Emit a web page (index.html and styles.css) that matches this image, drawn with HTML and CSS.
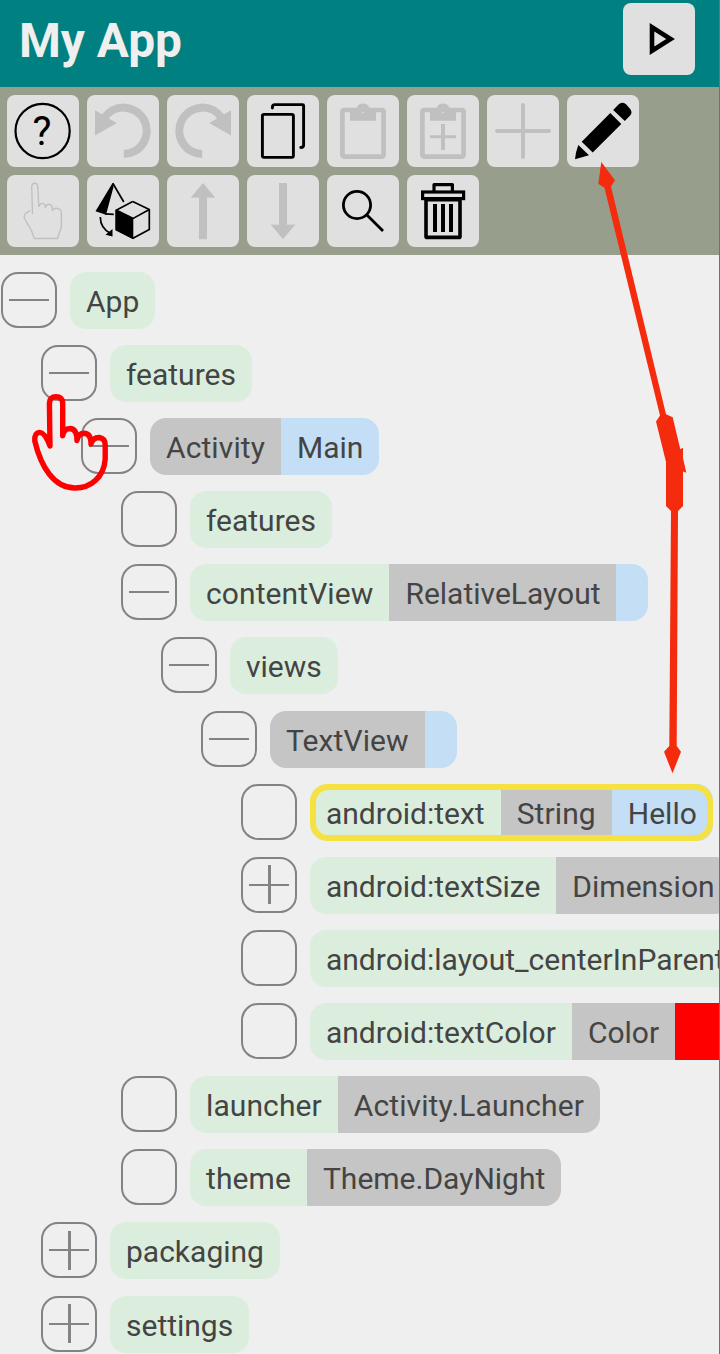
FILE: index.html
```
<!DOCTYPE html>
<html lang="en">
<head>
<meta charset="utf-8">
<title>My App</title>
<link rel="stylesheet" href="styles.css">
</head>
<body>
<div class="screen">
  <header class="header">
    <h1 class="title">My App</h1>
    <button class="tool" aria-label="Run"><svg viewBox="0 0 72 72"><path class="line" stroke-width="4.6" d="M29 24.2V47.8L47.6 36Z"/></svg></button>
  </header>
  <nav class="toolbar">
    <button class="tool" aria-label="Help"><svg viewBox="0 0 72 72"><circle class="line" cx="35.6" cy="36" r="27.1" stroke-width="2.2"/><text class="help" x="35" y="50.3" text-anchor="middle">?</text></svg></button>
    <button class="tool off" aria-label="Undo"><svg viewBox="0 0 72 72"><path class="line" stroke-width="8" d="M36.8 59A23.2 23.2 0 1 0 17.5 22.5"/><path d="M8 15.3V40.6L29.8 28Z"/></svg></button>
    <button class="tool off" aria-label="Redo"><svg viewBox="0 0 72 72"><g transform="translate(72 0) scale(-1 1)"><path class="line" stroke-width="8" d="M36.8 59A23.2 23.2 0 1 0 17.5 22.5"/><path d="M8 15.3V40.6L29.8 28Z"/></g></svg></button>
    <button class="tool" aria-label="Copy"><svg viewBox="0 0 72 72"><rect class="line" x="15.4" y="19.4" width="31" height="43" rx="1.6" stroke-width="2.9"/><path class="line round" stroke-width="2.9" d="M25.4 13V12q0-2.4 2.6-2.4H55.6q1 0 1 1V50q0 2.5-2.8 2.5"/></svg></button>
    <button class="tool off" aria-label="Paste"><svg viewBox="0 0 72 72"><rect class="line" x="15.4" y="15" width="41.2" height="46.6" rx="1.8" stroke-width="4.7"/><path fill-rule="evenodd" d="M23 13H29.5A7 7 0 0 1 42.5 13H49V25.8H23ZM36 12.7a2.6 2.6 0 1 0 .01 0Z"/></svg></button>
    <button class="tool off" aria-label="Paste inside"><svg viewBox="0 0 72 72"><rect class="line" x="15.4" y="15" width="41.2" height="46.6" rx="1.8" stroke-width="4.7"/><path fill-rule="evenodd" d="M23 13H29.5A7 7 0 0 1 42.5 13H49V25.8H23ZM36 12.7a2.6 2.6 0 1 0 .01 0Z"/><path d="M34 29h4v26h-4zM23 40.2h26v3H23z"/></svg></button>
    <button class="tool off" aria-label="Add"><svg viewBox="0 0 72 72"><path class="line round" stroke-width="4" d="M36 10V62M10 36H62"/></svg></button>
    <button class="tool" aria-label="Edit"><svg viewBox="0 0 72 72"><path d="M43.3 18L54.3 29L25.7 57.6L14.7 46.8ZM46.2 15L51.5 9.4Q55 6.3 59 9.3L63.2 14Q65.7 17.5 63.4 20.2L57.8 25.9ZM11.3 50L22 60.2L8 64.3L9 57.5Z"/></svg></button>
    <button class="tool off" aria-label="Select"><svg viewBox="0 0 72 72"><path class="line round" stroke-width="1.4" d="M25.5 38.5L24.7 12Q24.8 8.3 27.6 8.3Q30.5 8.3 30.8 12L31.8 31.5Q33 28.4 35.5 28.4Q38.5 28.6 38.3 32.5Q39.5 29 42.2 29.3Q45.7 29.8 45.3 35.5Q47 32.5 50.5 33.4Q54.3 34.5 54.4 38V52L50.5 63.5H27.2L24.5 55.5L17.5 43.5Q16.5 41 18.3 38.6L22.5 35.8"/></svg></button>
    <button class="tool" aria-label="Convert"><svg viewBox="0 0 72 72"><path d="M25.7 7.8L8.5 36.2L19 39.8L26.5 12ZM28.7 34.5L46.3 43V64L28.7 54.9ZM25.5 54V61.6L18.5 59.8Z"/><path class="line" stroke-width="1.7" d="M25.8 8.2L36.8 27M18 38.8L26.8 39.3M45.7 26.6L62.3 34.6V54.6L46 63.3L29.2 54.7V35.2L45.7 26.6M29 35L46.2 43.4L62.3 34.6M13.3 42Q13.3 53.5 24 58.7"/></svg></button>
    <button class="tool off" aria-label="Move up"><svg viewBox="0 0 72 72"><path d="M36 8L48.3 22.7L40 22.5V64.2H32V22.5L23.7 22.7Z"/></svg></button>
    <button class="tool off" aria-label="Move down"><svg viewBox="0 0 72 72"><path d="M36 64.2L48.3 49.5L40 49.7V8H32V49.7L23.7 49.5Z"/></svg></button>
    <button class="tool" aria-label="Search"><svg viewBox="0 0 72 72"><circle class="line" cx="30" cy="30" r="13.6" stroke-width="2.8"/><path class="line" stroke-width="2.8" d="M39.7 39.7L56 56"/></svg></button>
    <button class="tool" aria-label="Delete"><svg viewBox="0 0 72 72"><path class="line" stroke-width="3.2" stroke-linejoin="round" d="M27 16V9.6H45.4V16"/><rect class="line" x="15.6" y="17" width="41" height="6.6" stroke-width="3.2"/><rect class="line" x="19" y="24.8" width="34" height="37.6" rx="1" stroke-width="3.6"/><path d="M26 29h4v28h-4zM34 29h4v28h-4zM42 29h4v28h-4z"/></svg></button>
  </nav>
  <main class="tree">
    <div class="row d0"><span class="toggle minus"></span><div class="chip"><span class="name">App</span></div></div>
    <div class="row d1"><span class="toggle minus"></span><div class="chip"><span class="name">features</span></div></div>
    <div class="row d2"><span class="toggle minus"></span><div class="chip"><span class="type loose">Activity</span><span class="value">Main</span></div></div>
    <div class="row d3"><span class="toggle"></span><div class="chip"><span class="name">features</span></div></div>
    <div class="row d3"><span class="toggle minus"></span><div class="chip"><span class="name loose">contentView</span><span class="type">RelativeLayout</span><span class="value"></span></div></div>
    <div class="row d4"><span class="toggle minus"></span><div class="chip"><span class="name">views</span></div></div>
    <div class="row d5"><span class="toggle minus"></span><div class="chip"><span class="type loose">TextView</span><span class="value"></span></div></div>
    <div class="row d6"><span class="toggle"></span><div class="chip selected"><span class="name">android:text</span><span class="type loose">String</span><span class="value">Hello</span></div></div>
    <div class="row d6"><span class="toggle plus"></span><div class="chip"><span class="name">android:textSize</span><span class="type">Dimension</span></div></div>
    <div class="row d6"><span class="toggle"></span><div class="chip"><span class="name">android:layout_centerInParent</span></div></div>
    <div class="row d6"><span class="toggle"></span><div class="chip"><span class="name">android:textColor</span><span class="type">Color</span><span class="swatch"></span></div></div>
    <div class="row d3"><span class="toggle"></span><div class="chip"><span class="name loose">launcher</span><span class="type loose">Activity.Launcher</span></div></div>
    <div class="row d3"><span class="toggle"></span><div class="chip"><span class="name loose">theme</span><span class="type">Theme.DayNight</span></div></div>
    <div class="row d1"><span class="toggle plus"></span><div class="chip"><span class="name">packaging</span></div></div>
    <div class="row d1"><span class="toggle plus"></span><div class="chip"><span class="name">settings</span></div></div>
  </main>
  <svg class="annotations" viewBox="0 0 720 1354">
    <path class="pointer" d="M50 446L49.4 403Q50 396.7 56 396.7Q62.3 396.7 62.7 403V435.7Q63.5 428.6 70 428.5Q77 428.8 77 440.5Q78 433.3 84.7 433.3Q91 434 91 444Q92.5 437.6 99.3 437.5Q105.3 438.5 105.2 445V459C104 477 91 488 75 488C54 488 41 467 34.8 441Q34.3 433 39.5 432.4Q44.5 432 50 446Z"/>
    <path class="arrow" d="M601.3 162L615 180.3L611 186.5L666 414.3L672.7 417.3L680.3 449.3L683 447.7V458L686.3 472.7L683 471.5V506L678 511L676.7 746L681 751.7L672.5 773.3L664 751.7L669.3 746L671 511L666 506V462L656 421.5L660 415.5L604.5 188L598.3 183.7Z"/>
  </svg>
</div>
</body>
</html>
```
FILE: styles.css
```
* { box-sizing: border-box; }
body { margin: 0; background: #efefef; font-family: Roboto, sans-serif; }
.screen { position: relative; width: 720px; height: 1354px; overflow: hidden; }
.screen::after { content: ""; position: absolute; top: 0; right: 0; width: 1px; height: 100%; background: #4f8175; }
.header { display: flex; justify-content: space-between; align-items: flex-start; height: 87px; padding: 3.3px 24.7px 0 19px; background: #008080; }
.title { margin: 0; padding-top: 10px; font-size: 47.8px; line-height: 56px; font-weight: 700; color: #efefef; }
.toolbar { display: flex; flex-wrap: wrap; align-content: flex-start; gap: 8.1px; height: 168.4px; padding: 8.4px 70px 0 6.6px; background: #979f8c; }
.tool { flex: none; width: 72px; height: 72px; padding: 0; border: 0; border-radius: 8px; background: #e0e0e0; color: #000; }
.tool.off { color: #c0c0c0; }
.tool svg { display: block; width: 72px; height: 72px; fill: currentColor; }
.tool .line { fill: none; stroke: currentColor; }
.round { stroke-linecap: round; stroke-linejoin: round; }
.help { font-family: Roboto, sans-serif; font-size: 40px; }
.tree { padding-top: 16.4px; }
.row { display: flex; height: 73.14px; gap: 12.6px; padding-left: 1.4px; }
.d1 { padding-left: 41.4px; }
.d2 { padding-left: 81.4px; }
.d3 { padding-left: 121.4px; }
.d4 { padding-left: 161.4px; }
.d5 { padding-left: 201.4px; }
.d6 { padding-left: 241.4px; }
.toggle { flex: none; display: grid; place-items: center; width: 56px; height: 56px; border: 2px solid #838383; border-radius: 17px; }
.minus::before, .plus::before { content: ""; grid-area: 1 / 1; width: 40px; height: 2px; background: #838383; }
.plus::after { content: ""; grid-area: 1 / 1; width: 2.5px; height: 39px; background: #838383; }
.chip { position: relative; flex: none; display: flex; height: 57px; border-radius: 16px; overflow: hidden; font-size: 30px; line-height: 59.4px; color: #444; white-space: nowrap; }
.chip span { padding: 0 16px; }
.chip .loose { letter-spacing: .1px; }
.name { background: #dbeedd; }
.type { background: #c5c5c5; }
.value { background: #c4def5; }
.swatch { width: 80px; background: #f00; }
.selected::after { content: ""; position: absolute; inset: 0; border: 6px solid #f5e142; border-radius: 18px; }
.annotations { position: absolute; inset: 0; width: 720px; height: 1354px; pointer-events: none; }
.pointer { fill: none; stroke: #f00; stroke-width: 5.4; stroke-linejoin: round; }
.arrow { fill: #f42c0d; }
```
